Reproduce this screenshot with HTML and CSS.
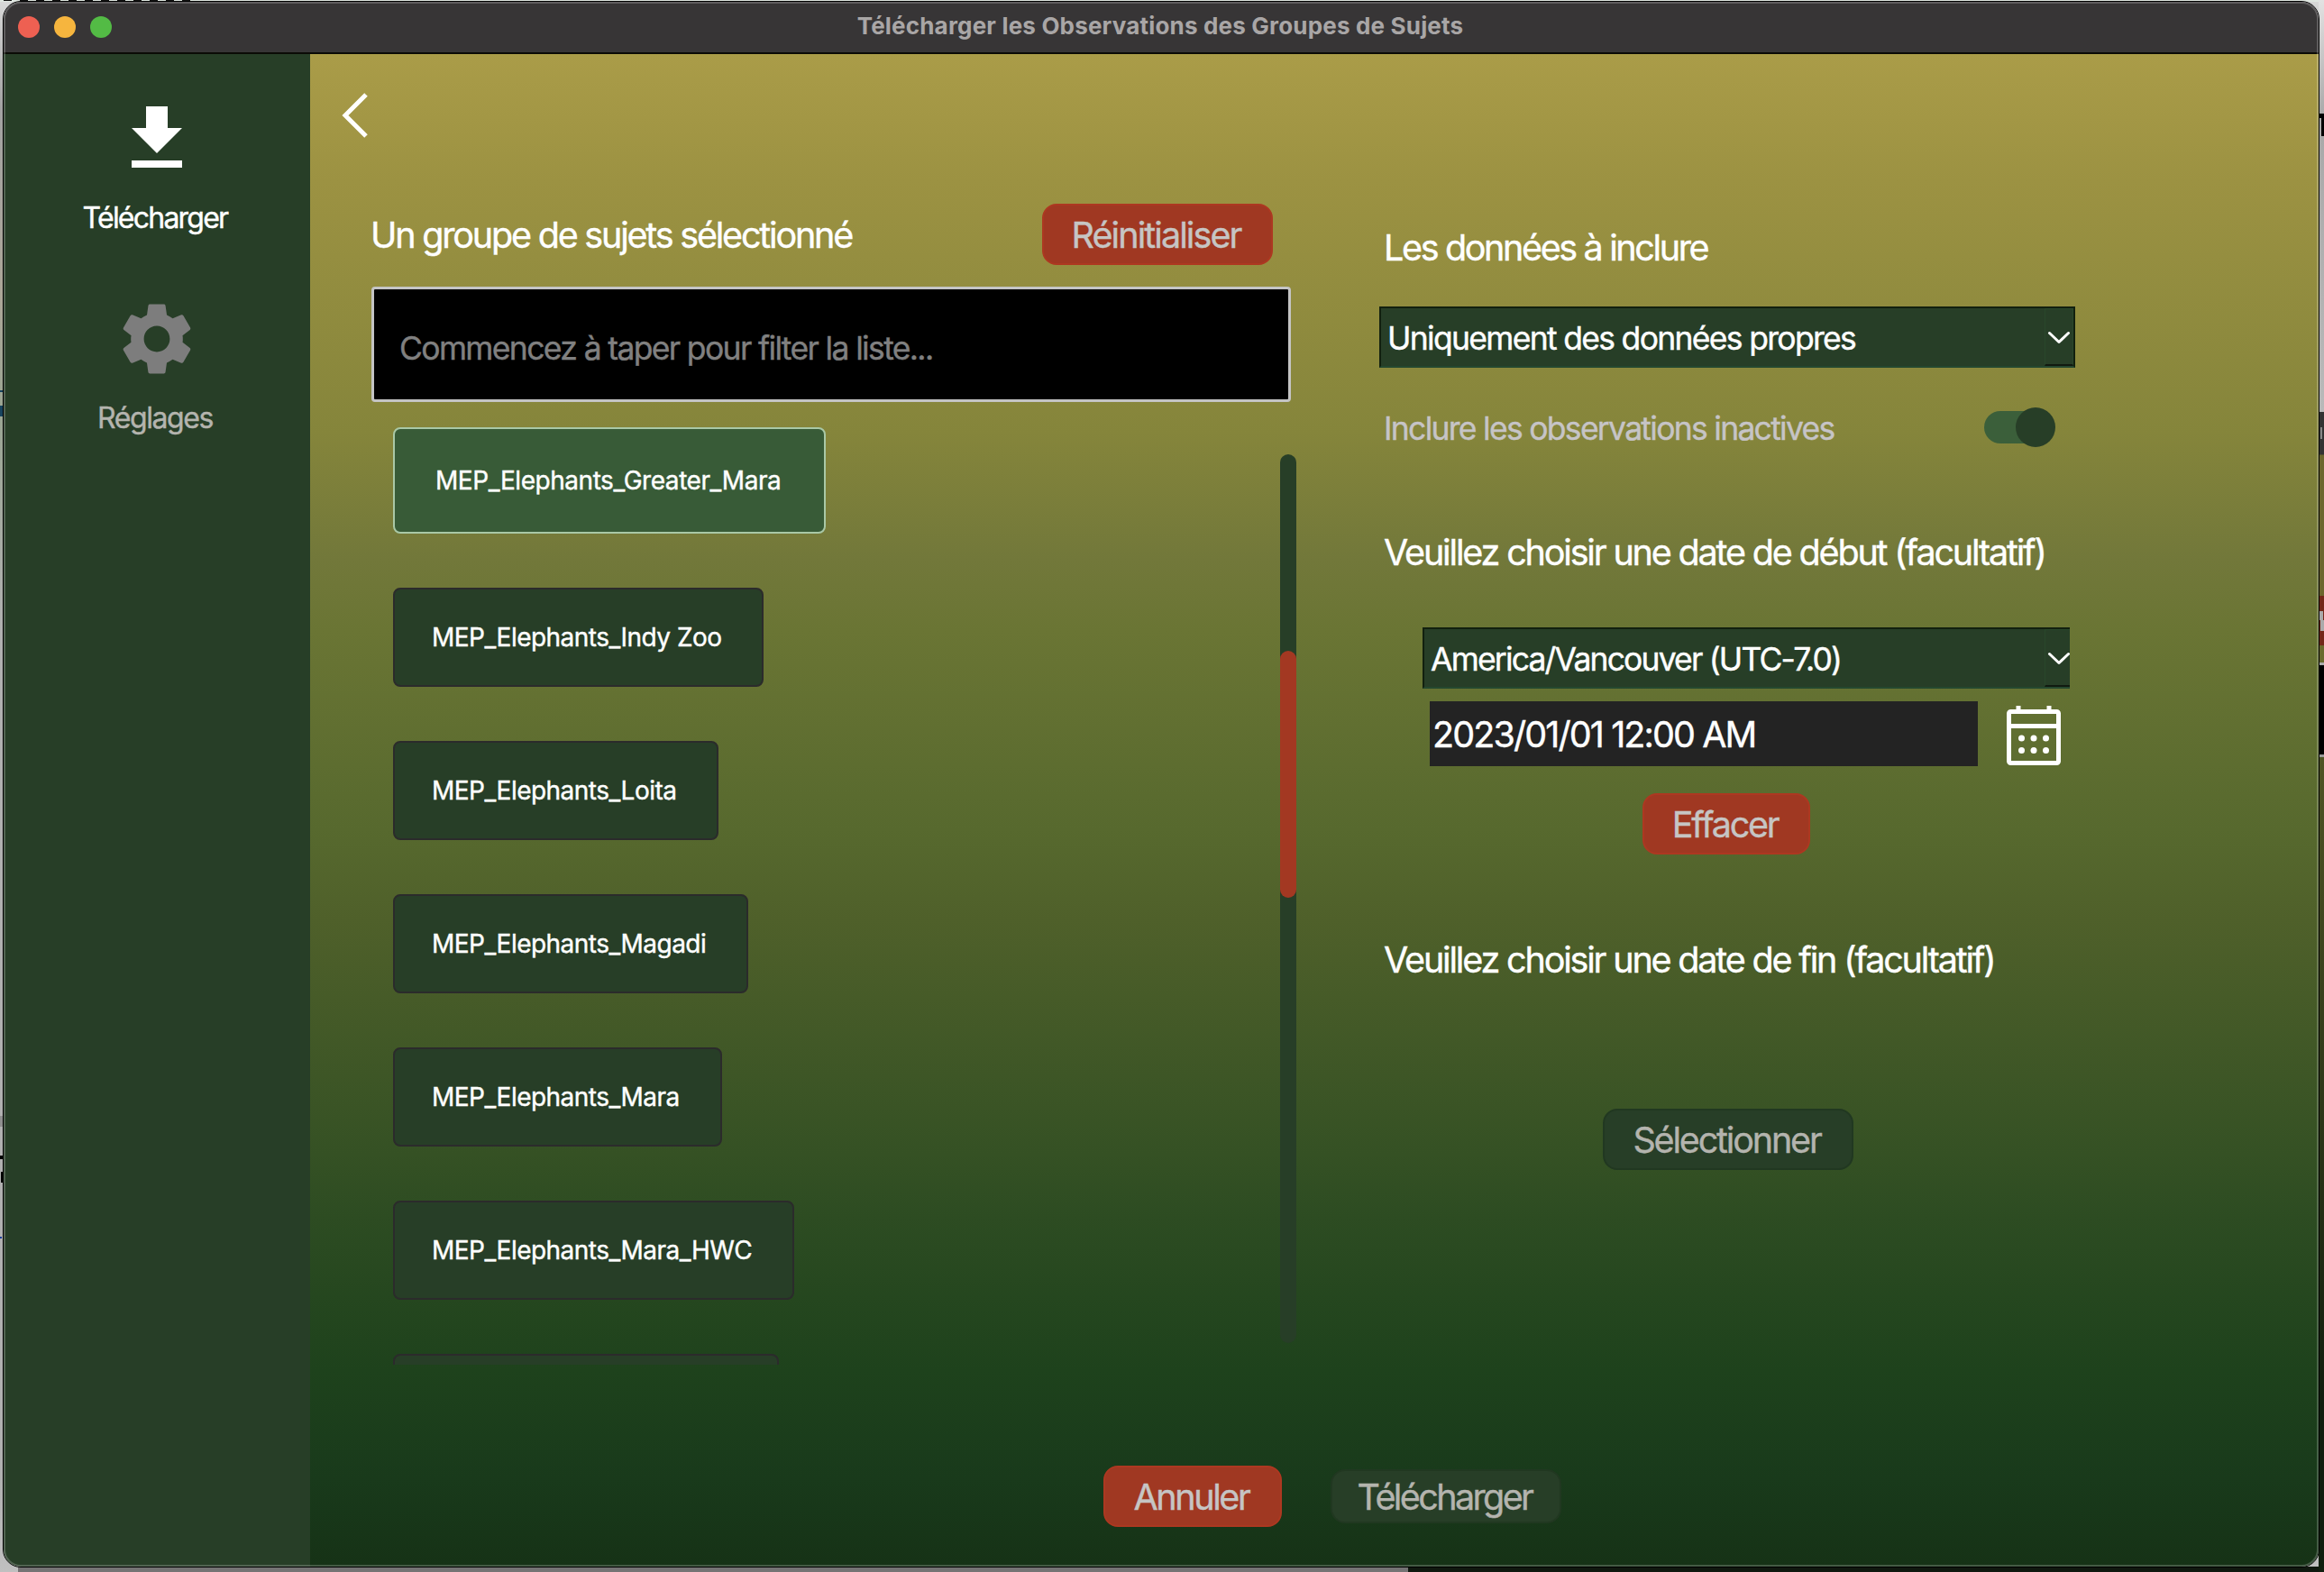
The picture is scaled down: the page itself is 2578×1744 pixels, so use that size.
FILE: index.html
```html
<!DOCTYPE html>
<html lang="fr">
<head>
<meta charset="utf-8">
<title>Télécharger les Observations des Groupes de Sujets</title>
<link rel="stylesheet" href="styles.css">
</head>
<body>
<div class="desktop">
  <div class="window">
    <header class="titlebar">
      <div class="lights"><i class="light light-close"></i><i class="light light-min"></i><i class="light light-max"></i></div>
      <h1 class="title">Télécharger les Observations des Groupes de Sujets</h1>
    </header>
    <div class="body">
      <nav class="sidebar">
        <a class="nav-item">
          <svg class="nav-icon" viewBox="0 0 24 24"><path d="M19 9h-4V3H9v6H5l7 7 7-7zM5 18v2h14v-2H5z"/></svg>
          <span class="nav-label">Télécharger</span>
        </a>
        <a class="nav-item nav-item-muted">
          <svg class="nav-icon" viewBox="0 0 24 24"><path d="M19.14 12.94c.04-.3.06-.61.06-.94 0-.32-.02-.64-.07-.94l2.03-1.58c.18-.14.23-.41.12-.61l-1.92-3.32c-.12-.22-.37-.29-.59-.22l-2.39.96c-.5-.38-1.03-.7-1.62-.94l-.36-2.54c-.04-.24-.24-.41-.48-.41h-3.84c-.24 0-.43.17-.47.41l-.36 2.54c-.59.24-1.13.57-1.62.94l-2.39-.96c-.22-.08-.47 0-.59.22L2.74 8.87c-.12.21-.08.47.12.61l2.03 1.58c-.05.3-.09.63-.09.94s.02.64.07.94l-2.03 1.58c-.18.14-.23.41-.12.61l1.92 3.32c.12.22.37.29.59.22l2.39-.96c.5.38 1.03.7 1.62.94l.36 2.54c.05.24.24.41.48.41h3.84c.24 0 .44-.17.47-.41l.36-2.54c.59-.24 1.13-.56 1.62-.94l2.39.96c.22.08.47 0 .59-.22l1.92-3.32c.12-.22.07-.47-.12-.61l-2.01-1.58zM12 15.6c-1.98 0-3.6-1.62-3.6-3.6s1.62-3.6 3.6-3.6 3.6 1.62 3.6 3.6-1.62 3.6-3.6 3.6z"/></svg>
          <span class="nav-label">Réglages</span>
        </a>
      </nav>
      <main class="main">
        <button class="back"><svg class="back-icon" viewBox="0 0 30 52"><path d="M27 3 4 26l23 23"/></svg></button>
        <div class="columns">
          <section class="groups">
            <div class="groups-head">
              <h2 class="heading">Un groupe de sujets sélectionné</h2>
              <button class="btn btn-red btn-reset">Réinitialiser</button>
            </div>
            <div class="filter">Commencez à taper pour filter la liste...</div>
            <div class="list">
              <div class="chips">
                <div class="chip chip-on">MEP_Elephants_Greater_Mara</div>
                <div class="chip">MEP_Elephants_Indy Zoo</div>
                <div class="chip">MEP_Elephants_Loita</div>
                <div class="chip">MEP_Elephants_Magadi</div>
                <div class="chip">MEP_Elephants_Mara</div>
                <div class="chip">MEP_Elephants_Mara_HWC</div>
                <div class="chip chip-cut"></div>
              </div>
              <div class="scroll"><div class="thumb"></div></div>
            </div>
          </section>
          <section class="options">
            <h2 class="heading heading-data">Les données à inclure</h2>
            <div class="select select-data"><span>Uniquement des données propres</span><b class="drop"><svg class="drop-icon" viewBox="0 0 26 16"><path d="M2.5 2.5 13 12.500 23.500 2.500"/></svg></b></div>
            <div class="toggle-row"><span>Inclure les observations inactives</span><i class="toggle"><i class="knob"></i></i></div>
            <h2 class="heading heading-start">Veuillez choisir une date de début (facultatif)</h2>
            <div class="select select-zone"><span>America/Vancouver (UTC-7.0)</span><b class="drop"><svg class="drop-icon" viewBox="0 0 26 16"><path d="M2.5 2.5 13 12.500 23.500 2.500"/></svg></b></div>
            <div class="date-row">
              <div class="date">2023/01/01 12:00 AM</div>
              <svg class="calendar" viewBox="0 0 60 68"><path class="cal-line" d="M4.500 7.500h51a2 2 0 0 1 2 2v53a2 2 0 0 1-2 2h-51a2 2 0 0 1-2-2v-53a2 2 0 0 1 2-2zM3 23.500h54M13 1v6M47 1v6"/><g class="cal-dots"><circle cx="16.500" cy="37" r="3.500"/><circle cx="30" cy="37" r="3.500"/><circle cx="43.500" cy="37" r="3.500"/><circle cx="16.500" cy="50.500" r="3.500"/><circle cx="30" cy="50.500" r="3.500"/><circle cx="43.500" cy="50.500" r="3.500"/></g></svg>
            </div>
            <button class="btn btn-red btn-clear">Effacer</button>
            <h2 class="heading heading-end">Veuillez choisir une date de fin (facultatif)</h2>
            <button class="btn btn-green btn-pick">Sélectionner</button>
          </section>
        </div>
        <footer class="actions">
          <button class="btn btn-red btn-cancel">Annuler</button>
          <button class="btn btn-green btn-go">Télécharger</button>
        </footer>
      </main>
    </div>
  </div>
</div>
</body>
</html>
```
FILE: styles.css
```css
* { box-sizing: border-box; }

body {
  margin: 0;
  font-family: Inter, "Liberation Sans", sans-serif;
  color: #fff;
  -webkit-text-stroke: .4px;
}

h1, h2 { margin: 0; font-weight: 400; }
button { font: inherit; border: 0; background: none; padding: 0; margin: 0; }
svg { display: block; }

/* Slivers of the windows behind the dialog */
.desktop {
  width: 2578px;
  height: 1744px;
  padding: 1px 5px 5px 3px;
  background:
    linear-gradient(#000, #000) 2573px 126px / 5px 5px no-repeat,
    linear-gradient(#000, #000) 2575px 131px / 3px 20px no-repeat,
    linear-gradient(#888, #888) 2574px 474px / 2px 13px no-repeat,
    linear-gradient(#aaa, #aaa) 2573px 678px / 4px 10px no-repeat,
    linear-gradient(#aaa, #aaa) 2574px 688px / 4px 12px no-repeat,
    linear-gradient(#e2e2e2, #a8a8a8 130px, #b9b9b9 457px, #333 457px, #333 504px, #6c662d 505px, #6c662d 661px, #732819 661px, #732819 716px, #6a6a2d 716px, #6a6a2d 735px, #aaa 735px, #aaa 738px, #000 738px, #000 837px, #999 837px, #999 840px, #4f5424 840px, #101e0e 1560px) 2572px 0 / 6px 1744px no-repeat,
    linear-gradient(90deg, #757374 1542px, #10180f 1542px) 20px 1738px / 2558px 6px no-repeat,
    repeating-linear-gradient(90deg, #111 0 9px, #dfe6e0 9px 18px) 4px 0 / 214px 1px no-repeat,
    linear-gradient(#dfe6e0, #dfe6e0) 0 0 / 2572px 2px no-repeat,
    linear-gradient(#17435e, #17435e) 0 433px / 3px 2px no-repeat,
    linear-gradient(#17435e, #17435e) 0 450px / 3px 12px no-repeat,
    linear-gradient(#8f8f8f, #8f8f8f) 0 1238px / 3px 12px no-repeat,
    linear-gradient(#000, #000) 0 1282px / 3px 4px no-repeat,
    linear-gradient(#000, #000) 1px 1300px / 2px 12px no-repeat,
    linear-gradient(#1b3c9c, #1b3c9c) 0 1372px / 2px 2px no-repeat,
    linear-gradient(#d8d8d8, #a3a3a3 120px, #aca698 330px, #9aa593 460px, #b1b1b1 700px, #b1b1b1 1640px, #c0c0c0 1744px);
}

.window {
  position: relative;
  display: flex;
  flex-direction: column;
  height: 1738px;
  border: 1px solid #000;
  border-radius: 20px;
  overflow: hidden;
}

.window::after {
  content: "";
  position: absolute;
  inset: 0;
  border: 2px solid rgba(255, 255, 255, .2);
  border-radius: 19px;
  pointer-events: none;
}

.titlebar {
  position: relative;
  display: flex;
  align-items: center;
  justify-content: center;
  height: 58px;
  padding: 0 2px 3px 0;
  background: #373536;
  border-bottom: 2px solid #0b0b06;
}

.lights {
  position: absolute;
  left: 16px;
  top: 16px;
  display: flex;
  gap: 16px;
}

.light { width: 24px; height: 24px; border-radius: 50%; }
.light-close { background: #ee6052; }
.light-min { background: #f6b53e; }
.light-max { background: #53bb45; }

.title { font-size: 26px; line-height: 32px; font-weight: 700; letter-spacing: .18px; color: #a9a6a6; white-space: nowrap; -webkit-text-stroke: 0; }

.body { display: flex; flex: 1; }

.sidebar {
  display: flex;
  flex-direction: column;
  align-items: center;
  width: 340px;
  padding-top: 46px;
  background: #273e27;
}

.nav-item { display: flex; flex-direction: column; align-items: center; height: 222px; gap: 20px; }
.nav-icon { width: 96px; height: 96px; fill: #fff; }
.nav-label { padding-right: 4px; font-size: 32px; line-height: 40px; letter-spacing: -1.770px; }
.nav-item-muted { color: #b4b4ae; }
.nav-item-muted .nav-icon { fill: #7d7d7d; }
.nav-item-muted .nav-label { letter-spacing: -1.410px; }

.main {
  flex: 1;
  display: flex;
  flex-direction: column;
  background: linear-gradient(#aa9c48, #9c9242 140px, #85853b 420px, #72783a 560px, #6a7534 640px, #57692e 860px, #4f602a 960px, #355124 1220px, #2d4c22 1290px, #1e421c 1460px, #193a1b 1580px, #163216);
}

.back { width: 30px; margin: 42px 0 0 35px; }
.back-icon { width: 30px; height: 52px; fill: none; stroke: #fff; stroke-width: 5px; }

.columns { display: flex; gap: 92px; height: 1360px; padding: 72px 0 0 68px; }

.heading { padding-top: 2px; font-size: 39.500px; line-height: 46px; letter-spacing: -2.200px; white-space: nowrap; }
.heading-data { letter-spacing: -2.360px; }

.groups { width: 1026px; }
.groups-head { display: flex; justify-content: space-between; align-items: center; height: 68px; margin-left: -1px; padding-right: 26px; }

.btn {
  display: flex;
  align-items: center;
  justify-content: center;
  height: 68px;
  padding: 2px 3px 0 0;
  border-radius: 16px;
  font-size: 39.500px;
  line-height: 48px;
}
.btn-red { background: #a03822; border: 2px solid #ad3821; color: #c6c5c4; }
.btn-green { background: #273e27; border: 2px solid #213821; color: #b4b4ae; }
.btn-reset { width: 256px; letter-spacing: -1.920px; }

.filter {
  display: flex;
  align-items: center;
  width: 1020px;
  height: 128px;
  margin-top: 24px;
  padding: 8px 0 0 28px;
  background: #000;
  border: 3px solid #c4c4c4;
  border-radius: 4px;
  font-size: 35.500px;
  letter-spacing: -1.650px;
  color: #808080;
}

.list { display: flex; justify-content: space-between; height: 1068px; overflow: hidden; }

.chips { display: flex; flex-direction: column; align-items: flex-start; gap: 60px; padding: 28px 0 0 24px; }

.chip {
  flex: none;
  display: flex;
  align-items: center;
  height: 110px;
  padding: 0 45px 0 41px;
  background: #273e27;
  border: 2px solid #2b2b2b;
  border-radius: 8px;
  font-size: 28px;
  letter-spacing: -.530px;
  white-space: nowrap;
}
.chip-on { height: 118px; padding: 0 48px 0 45px; background: #385b37; border-color: #a9c8a6; letter-spacing: -.450px; }
.chip-cut { width: 428px; }

.scroll { width: 18px; height: 986px; margin-top: 58px; padding-top: 218px; background: #273e27; border-radius: 9px; }
.thumb { height: 274px; background: #a33822; border-radius: 9px; }

.options { width: 772px; padding-top: 24px; }
.options .heading { margin-left: 5px; }

.select {
  display: flex;
  align-items: center;
  justify-content: space-between;
  height: 68px;
  padding-left: 7px;
  background: #273e27;
  border: 2px solid #12200f;
  border-bottom-color: #25482f;
  font-size: 35.500px;
  letter-spacing: -1.690px;
}
.select span { padding-top: 2px; }
.select-data { margin-top: 42px; }
.select-zone { width: 718px; margin: 60px 0 0 48px; border-right: 0; letter-spacing: -1.830px; }

.drop {
  align-self: stretch;
  display: flex;
  align-items: center;
  width: 32px;
  padding-left: 2px;
  border: 1px solid #29472b;
  border-bottom: 2px solid #101a10;
}
.select-zone .drop { width: 28px; border-right: 0; }
.drop-icon { flex: none; width: 26px; height: 16px; margin-top: 3px; fill: none; stroke: #fff; stroke-width: 3px; stroke-linecap: round; stroke-linejoin: round; }

.toggle-row {
  display: flex;
  align-items: center;
  justify-content: space-between;
  height: 44px;
  margin: 44px 22px 0 5px;
  font-size: 35.500px;
  letter-spacing: -1.715px;
  color: #c6c4c6;
}
.toggle-row span { padding-top: 2px; }
.toggle { display: flex; align-items: center; justify-content: flex-end; width: 79px; height: 36px; background: linear-gradient(90deg, #3b5f3a 60px, transparent 60px); border-radius: 18px; }
.knob { flex: none; width: 44px; height: 44px; border-radius: 50%; background: #273e27; }

.heading-start { margin-top: 92px; letter-spacing: -2.170px; }

.date-row { display: flex; gap: 32px; margin: 14px 0 0 56px; }
.date { display: flex; align-items: center; width: 608px; height: 72px; padding: 2px 0 0 3px; background: #232323; font-size: 39.500px; letter-spacing: -1.900px; }
.calendar { width: 60px; height: 68px; margin-top: 4px; }
.cal-line { fill: none; stroke: #fff; stroke-width: 5px; }
.cal-dots { fill: #fff; }

.btn-clear { width: 186px; margin: 30px 0 0 292px; letter-spacing: -2.260px; }
.heading-end { margin-top: 92px; letter-spacing: -2.180px; }
.btn-pick { width: 278px; margin: 142px 0 0 248px; letter-spacing: -2.170px; }

.actions { display: flex; align-items: center; gap: 54px; margin: 112px 0 0 880px; }
.btn-cancel { width: 198px; letter-spacing: -2.400px; }
.btn-go { width: 256px; height: 60px; letter-spacing: -2.610px; }
```
